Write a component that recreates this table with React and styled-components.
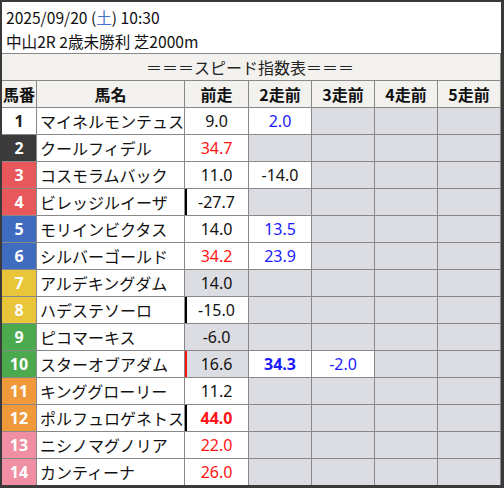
import React from 'react';
import styled, { createGlobalStyle } from 'styled-components';

const GlobalStyle = createGlobalStyle`
html, body {
  margin:0;
  padding:0;
  background:#fff;
}
body {
  font-family:"Noto Sans CJK JP", "Noto Sans", sans-serif;
  color:#111;
}
`

const COLS = '35px 148px 64px 63px 63px 63px 63px';
const LINE = '#888';

const WAKU = {
  1: ['#ffffff', '#222'],
  2: ['#3b3b3b', '#fff'],
  3: ['#e8585b', '#fff'],
  4: ['#e8585b', '#fff'],
  5: ['#3f6cbf', '#fff'],
  6: ['#3f6cbf', '#fff'],
  7: ['#e9c53a', '#fff'],
  8: ['#e9c53a', '#fff'],
  9: ['#4aaa4d', '#fff'],
  10: ['#4aaa4d', '#fff'],
  11: ['#f0993a', '#fff'],
  12: ['#f0993a', '#fff'],
  13: ['#f08fa3', '#fff'],
  14: ['#f08fa3', '#fff'],
};

const TEXT = { red: '#ff1414', blue: '#1a1aff' };

const Frame = styled.div`
width:504px;
height:488px;
box-sizing:border-box;
border-style:solid;
border-color:#3a3a3a;
border-width:2px 3px 3px 2px;
background:#fff;
display:flex;
flex-direction:column;
overflow:hidden;
`
const Title = styled.div`
height:51px;
box-sizing:border-box;
padding:3px 0 0 4px;
font-size:15.6px;
line-height:24px;
`
const Day = styled.span`
color:#4a6fd6;
`
const Banner = styled.div`
height:27px;
box-sizing:border-box;
border-top:1px solid ${LINE};
border-right:1px solid ${LINE};
background:#f2f1ed;
display:flex;
align-items:center;
justify-content:center;
font-size:16px;
color:#222;
padding-right:2px;
`
const Row = styled.div`
display:grid;
grid-template-columns:${COLS};
height:27px;
box-sizing:border-box;
border-top:1px solid ${LINE};
`
const HeadCell = styled.div`
background:#f2f1ed;
border-right:1px solid ${LINE};
display:flex;
align-items:center;
justify-content:center;
font-size:16px;
font-weight:700;
`
const NumCell = styled.div`
background:${p => WAKU[p.no][0]};
color:${p => WAKU[p.no][1]};
border-right:1px solid ${LINE};
display:flex;
align-items:center;
justify-content:center;
font-family:"Noto Sans", "Noto Sans CJK JP", sans-serif;
font-size:16px;
font-weight:700;
`
const NameCell = styled.div`
border-right:1px solid ${LINE};
display:flex;
align-items:center;
padding-left:3px;
font-size:16px;
white-space:nowrap;
overflow:hidden;
`
const ValCell = styled.div`
background:${p => p.empty || p.gray ? '#dcdde2' : '#fff'};
color:${p => TEXT[p.tone] || '#111'};
font-weight:${p => p.bold ? 700 : 400};
border-right:1px solid ${LINE};
box-shadow:${p => p.mark ? `inset 2px 0 0 ${p.mark}` : 'none'};
display:flex;
align-items:center;
justify-content:center;
font-family:"Noto Sans", "Noto Sans CJK JP", sans-serif;
font-size:16px;
`

const rows = [
  { no: 1, name: 'マイネルモンテュス', runs: [{ v: '9.0' }, { v: '2.0', tone: 'blue' }] },
  { no: 2, name: 'クールフィデル', runs: [{ v: '34.7', tone: 'red' }] },
  { no: 3, name: 'コスモラムバック', runs: [{ v: '11.0' }, { v: '-14.0' }] },
  { no: 4, name: 'ビレッジルイーザ', runs: [{ v: '-27.7', mark: '#000' }] },
  { no: 5, name: 'モリインビクタス', runs: [{ v: '14.0' }, { v: '13.5', tone: 'blue' }] },
  { no: 6, name: 'シルバーゴールド', runs: [{ v: '34.2', tone: 'red' }, { v: '23.9', tone: 'blue' }] },
  { no: 7, name: 'アルデキングダム', runs: [{ v: '14.0', gray: true }] },
  { no: 8, name: 'ハデステソーロ', runs: [{ v: '-15.0', mark: '#000' }] },
  { no: 9, name: 'ピコマーキス', runs: [{ v: '-6.0', gray: true }] },
  { no: 10, name: 'スターオブアダム', runs: [{ v: '16.6', gray: true, mark: '#ff1414' }, { v: '34.3', tone: 'blue', bold: true }, { v: '-2.0', tone: 'blue' }] },
  { no: 11, name: 'キンググローリー', runs: [{ v: '11.2' }] },
  { no: 12, name: 'ポルフュロゲネトス', runs: [{ v: '44.0', tone: 'red', bold: true, mark: '#000' }] },
  { no: 13, name: 'ニシノマグノリア', runs: [{ v: '22.0', tone: 'red' }] },
  { no: 14, name: 'カンティーナ', runs: [{ v: '26.0', tone: 'red' }] },
];

const heads = ['馬番', '馬名', '前走', '2走前', '3走前', '4走前', '5走前'];

export default function App() {
  return (
    <Frame>
      <GlobalStyle />
      <Title>
        <div>2025/09/20 (<Day>土</Day>) 10:30</div>
        <div>中山2R 2歳未勝利 芝2000m</div>
      </Title>
      <Banner>＝＝＝スピード指数表＝＝＝</Banner>
      <Row>
        {heads.map(h => <HeadCell key={h}>{h}</HeadCell>)}
      </Row>
      {rows.map(r => (
        <Row key={r.no}>
          <NumCell no={r.no}>{r.no}</NumCell>
          <NameCell>{r.name}</NameCell>
          {[0, 1, 2, 3, 4].map(i => {
            const run = r.runs[i];
            if (!run) return <ValCell key={i} empty />;
            return (
              <ValCell key={i} tone={run.tone} bold={run.bold} gray={run.gray} mark={run.mark}>
                {run.v}
              </ValCell>
            );
          })}
        </Row>
      ))}
    </Frame>
  );
}
